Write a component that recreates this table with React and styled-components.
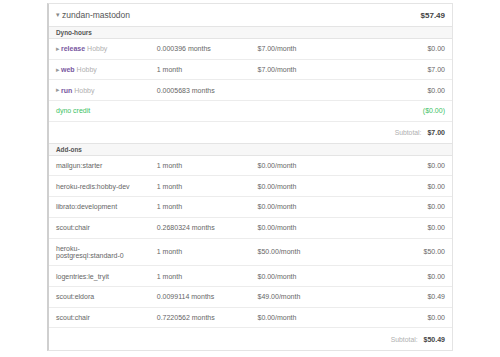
import React from "react";
import styled, { createGlobalStyle } from "styled-components";

const GlobalStyle = createGlobalStyle`
  html, body {
    margin: 0;
    padding: 0;
    background: #ffffff;
  }
  body {
    font-family: "Liberation Sans", Arial, sans-serif;
    color: #666;
  }
`;

const dynos = [
  { name: "release", plan: "Hobby", qty: "0.000396 months", rate: "$7.00/month", total: "$0.00" },
  { name: "web", plan: "Hobby", qty: "1 month", rate: "$7.00/month", total: "$7.00" },
  { name: "run", plan: "Hobby", qty: "0.0005683 months", rate: "", total: "$0.00" },
];

const addons = [
  { name: "mailgun:starter", qty: "1 month", rate: "$0.00/month", total: "$0.00" },
  { name: "heroku-redis:hobby-dev", qty: "1 month", rate: "$0.00/month", total: "$0.00" },
  { name: "librato:development", qty: "1 month", rate: "$0.00/month", total: "$0.00" },
  { name: "scout:chair", qty: "0.2680324 months", rate: "$0.00/month", total: "$0.00" },
  { name: "heroku-postgresql:standard-0", qty: "1 month", rate: "$50.00/month", total: "$50.00" },
  { name: "logentries:le_tryit", qty: "1 month", rate: "$0.00/month", total: "$0.00" },
  { name: "scout:eldora", qty: "0.0099114 months", rate: "$49.00/month", total: "$0.49" },
  { name: "scout:chair", qty: "0.7220562 months", rate: "$0.00/month", total: "$0.00" },
];

function App() {
  return (
    <>
      <GlobalStyle />
      <Page>
        <Panel>
          <AppHeader>
            <Title>
              <Caret>▾</Caret>zundan-mastodon
            </Title>
            <AppTotal>$57.49</AppTotal>
          </AppHeader>

          <SectionHeader>Dyno-hours</SectionHeader>
          {dynos.map((d) => (
            <Row key={d.name}>
              <Cell>
                <Arrow>▸</Arrow>
                <DynoName>{d.name}</DynoName> <Plan>{d.plan}</Plan>
              </Cell>
              <Cell>{d.qty}</Cell>
              <Cell>{d.rate}</Cell>
              <Amount>{d.total}</Amount>
            </Row>
          ))}
          <Row>
            <Cell $green>dyno credit</Cell>
            <Cell />
            <Cell />
            <Amount $green>($0.00)</Amount>
          </Row>
          <SubtotalRow>
            <SubLabel>Subtotal:</SubLabel>
            <SubValue>$7.00</SubValue>
          </SubtotalRow>

          <SectionHeader>Add-ons</SectionHeader>
          {addons.map((a, i) => (
            <Row key={i}>
              <Cell>{a.name}</Cell>
              <Cell>{a.qty}</Cell>
              <Cell>{a.rate}</Cell>
              <Amount>{a.total}</Amount>
            </Row>
          ))}
          <SubtotalRow $last>
            <SubLabel>Subtotal:</SubLabel>
            <SubValue>$50.49</SubValue>
          </SubtotalRow>
        </Panel>
      </Page>
    </>
  );
}

export default App;

const Page = styled.div`
  padding-top: 3px;
  display: flex;
  justify-content: center;
`;

const Panel = styled.div`
  width: 403px;
  border: 1px solid #e4e4e4;
  border-left: 2px solid #cfcfcf;
  background: #fff;
`;

const AppHeader = styled.div`
  display: flex;
  align-items: center;
  justify-content: space-between;
  height: 22px;
  padding: 0 7px;
  border-bottom: 1px solid #e4e4e4;
`;

const Title = styled.div`
  font-size: 8.5px;
  line-height: 10px;
  color: #555;
`;

const Caret = styled.span`
  font-size: 7px;
  line-height: 0;
  color: #888;
  margin-right: 2px;
  vertical-align: 1px;
`;

const AppTotal = styled.div`
  font-size: 8px;
  font-weight: bold;
  color: #444;
`;

const SectionHeader = styled.div`
  background: #f7f7f7;
  border-bottom: 1px solid #e4e4e4;
  font-size: 6.4px;
  font-weight: bold;
  color: #555;
  padding: 0 7px;
  height: 11px;
  line-height: 11px;
`;

const Row = styled.div`
  display: grid;
  grid-template-columns: repeat(4, 1fr);
  align-items: center;
  border-bottom: 1px solid #ececec;
  font-size: 7px;
  line-height: 7px;
`;

const Cell = styled.div`
  padding: 6.35px 7px;
  color: ${(p) => (p.$green ? "#3cbf63" : "#666")};
`;

const Amount = styled(Cell)`
  text-align: right;
`;

const Arrow = styled.span`
  font-size: 6.5px;
  line-height: 0;
  vertical-align: 0.5px;
  color: #999;
  margin-right: 1px;
`;

const DynoName = styled.span`
  font-weight: bold;
  color: #79589f;
`;

const Plan = styled.span`
  color: #b0b0b0;
`;

const SubtotalRow = styled.div`
  display: flex;
  justify-content: flex-end;
  align-items: center;
  gap: 6px;
  height: ${(p) => (p.$last ? "22px" : "21px")};
  padding: 0 7px;
  border-bottom: ${(p) => (p.$last ? "none" : "1px solid #e4e4e4")};
`;

const SubLabel = styled.span`
  font-size: 6.8px;
  color: #b0b0b0;
`;

const SubValue = styled.span`
  font-size: 7px;
  font-weight: bold;
  color: #444;
`;
